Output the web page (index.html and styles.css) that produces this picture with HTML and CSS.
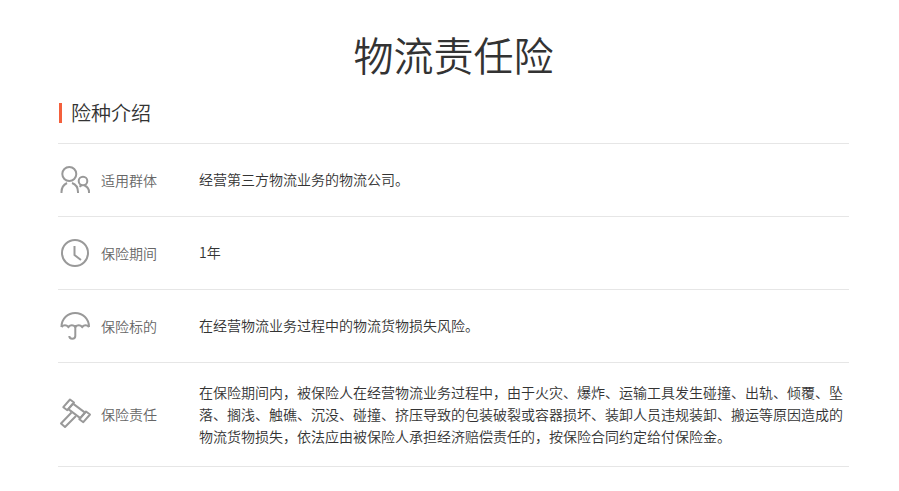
FILE: index.html
```html
<!DOCTYPE html>
<html lang="zh-CN">
<head>
<meta charset="utf-8">
<title>物流责任险</title>
<link rel="stylesheet" href="styles.css">
</head>
<body>
<main class="page">
  <h1 class="title">物流责任险</h1>
  <h2 class="section-title">险种介绍</h2>
  <ul class="rows">
    <li class="row">
      <div class="label">
        <svg class="icon" viewBox="0 0 34 34" fill="none" stroke="#999" stroke-width="2">
          <circle cx="11.300" cy="11" r="7"/>
          <path d="M3.500 30v-1c0-4.500 2.500-7.500 5.500-9M14 20c3.500 1.200 6 4.500 6 9v1"/>
          <circle cx="25" cy="18" r="4.300"/>
          <path d="M31 30v-1c0-3-1.800-5.300-4.500-6.500M23.500 22.500c-.8.3-1.500.7-2 1.200"/>
        </svg>
        <span>适用群体</span>
      </div>
      <div class="text">经营第三方物流业务的物流公司。</div>
    </li>
    <li class="row">
      <div class="label">
        <svg class="icon" viewBox="0 0 34 34" fill="none" stroke="#999" stroke-width="2">
          <circle cx="17" cy="17" r="13"/>
          <path d="M16.500 10v9l6.500 5"/>
        </svg>
        <span>保险期间</span>
      </div>
      <div class="text">1年</div>
    </li>
    <li class="row">
      <div class="label">
        <svg class="icon" viewBox="0 0 34 34" fill="none" stroke="#999" stroke-width="2">
          <path d="M3.500 18C3.500 9.500 10 4 17.200 4S31 9.500 31 18"/>
          <path d="M3.500 18c2-2.400 4.900-2.400 6.900 0 2-2.400 4.900-2.400 6.900 0 2-2.400 4.900-2.400 6.900 0 2-2.400 4.800-2.400 6.800 0"/>
          <path d="M17.300 16v11c0 3.500-6 3.500-6 0"/>
        </svg>
        <span>保险标的</span>
      </div>
      <div class="text">在经营物流业务过程中的物流货物损失风险。</div>
    </li>
    <li class="row">
      <div class="label">
        <svg class="icon" viewBox="0 0 34 34" fill="none" stroke="#999" stroke-width="2" stroke-linejoin="round">
          <path d="M12 2.500l4 3-6.700 7.700-4-3z"/>
          <path d="M28 14.500l4 3-6.700 7.700-4-3z"/>
          <path d="M15 6.600l12 9-4.700 5.500-12-9z"/>
          <path d="M13.500 15.500L3 26.500l4 3.500 11-11"/>
        </svg>
        <span>保险责任</span>
      </div>
      <div class="text">在保险期间内，被保险人在经营物流业务过程中，由于火灾、爆炸、运输工具发生碰撞、出轨、倾覆、坠落、搁浅、触礁、沉没、碰撞、挤压导致的包装破裂或容器损坏、装卸人员违规装卸、搬运等原因造成的物流货物损失，依法应由被保险人承担经济赔偿责任的，按保险合同约定给付保险金。</div>
    </li>
  </ul>
</main>
</body>
</html>
```
FILE: styles.css
```css
* { box-sizing: border-box; }
html, body { margin: 0; padding: 0; background: #fff; }
body { font-family: "Noto Sans CJK SC", "Liberation Sans", sans-serif; color: #333; overflow: hidden; }
.page { width: 791px; margin-left: 58px; padding-top: 25px; }
.title { margin: 0; height: 58px; font-size: 40px; font-weight: 350; line-height: 58px; text-align: center; color: #333; }
.section-title { margin: 20px 0 0 1px; height: 20px; padding-left: 9px; border-left: 3px solid #f4603c; font-size: 20px; font-weight: 350; line-height: 20px; color: #333; }
.rows { list-style: none; margin: 20px 0 0; padding: 0; border-top: 1px solid #e6e6e6; }
.row { display: flex; align-items: center; min-height: 73px; border-bottom: 1px solid #e6e6e6; }
.row:last-child { min-height: 104px; }
.row:last-child .label { margin-top: -1px; }
.label { display: flex; align-items: center; flex: none; width: 141px; font-size: 14px; font-weight: 350; color: #666; }
.icon { width: 34px; height: 34px; flex: none; margin-right: 9px; }
.text { flex: 1; font-size: 14px; font-weight: 350; line-height: 22px; color: #333; position: relative; top: -1px; }
```
